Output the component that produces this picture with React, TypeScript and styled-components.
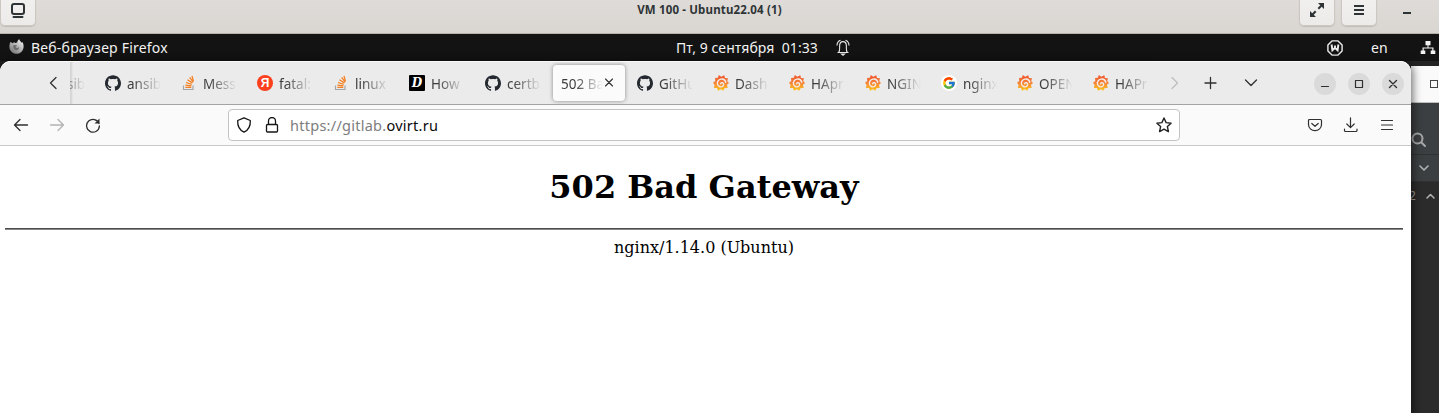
import React from 'react';
import styled, { createGlobalStyle, css } from 'styled-components';
import { SiGithub } from 'react-icons/si';
import { FcGoogle } from 'react-icons/fc';

const GlobalStyle = createGlobalStyle`
  * { box-sizing: border-box; }
  body { margin: 0; overflow: hidden; background: #141414; }
`;

const uiFont = "'Noto Sans', 'Open Sans', sans-serif";

const Screen = styled.div`
  display: flex;
  flex-direction: column;
  width: 1439px;
  height: 413px;
  overflow: hidden;
  font-family: ${uiFont};
`;

/* Viewer title bar */
const ViewerBar = styled.header`
  display: grid;
  grid-template-columns: 1fr auto 1fr;
  height: 34px;
  flex: none;
  background: linear-gradient(#dfdbd8, #d9d5d0);
  border-bottom: 1px solid #b5b3a8;
`;

const ViewerTitle = styled.div`
  font: 700 11.5px/20px ${uiFont};
  letter-spacing: 0.15px;
  color: #2e3436;
  white-space: pre;
  margin-right: 20px;
`;

const ViewerButtons = styled.div<{ $end?: boolean }>`
  display: flex;
  gap: 6px;
  ${(p) => p.$end && 'justify-content: flex-end; padding-right: 28px; margin-left: -20px;'}
`;

const ViewerButton = styled.div`
  width: 36px;
  height: 27px;
  margin-top: -1px;
  display: flex;
  justify-content: center;
  padding-top: 3px;
  border: 1px solid #cdc7c2;
  border-top: 0;
  border-radius: 0 0 5px 5px;
  background: linear-gradient(#f1f0ee, #edebe9);
  box-shadow: 0 1px 1px rgba(0, 0, 0, 0.12);
`;

const ViewerMinimize = styled.div`
  width: 8px;
  height: 2px;
  margin: 12px 0 0 20px;
  background: #2e3436;
`;

/* Desktop top panel */
const Panel = styled.div`
  display: grid;
  grid-template-columns: 676px 1fr 112px;
  height: 27px;
  flex: none;
  background: #131313;
  color: #f2f2f2;
`;

const PanelGroup = styled.div`
  display: flex;
  align-items: center;
`;

const FirefoxMark = styled.svg`
  margin: 0 7px 2px 9px;
`;

const PanelText = styled.span<{ $spacing?: number }>`
  font-size: 14px;
  line-height: 27px;
  white-space: pre;
  letter-spacing: ${(p) => p.$spacing ?? 0}px;
`;

const Bell = styled.svg`
  margin-left: 17px;
`;

const Language = styled(PanelText)`
  margin: 0 32px 0 28px;
`;

/* Browser */
const Desktop = styled.div`
  display: flex;
  flex: 1;
  min-height: 0;
  background: #232323;
`;

const Browser = styled.main`
  position: relative;
  z-index: 1;
  display: flex;
  flex-direction: column;
  width: 1411px;
  flex: none;
  background: #fff;
  border-radius: 11px 11px 0 0;
  box-shadow: 0 2px 9px 2px rgba(0, 0, 0, 0.55);
`;

const TabBar = styled.div`
  display: flex;
  align-items: center;
  height: 44px;
  flex: none;
  background: #ebebeb;
  border-top: 1px solid #fbfbfb;
  border-bottom: 1px solid #a3a3a3;
  border-radius: 11px 11px 0 0;
  color: #3c3c3c;
`;

const ScrollBack = styled.div`
  width: 70px;
  height: 42px;
  flex: none;
  display: flex;
  align-items: center;
  padding-left: 49px;
`;

const TabStrip = styled.div`
  display: flex;
  width: 1089px;
  height: 42px;
  flex: none;
  overflow: hidden;
  box-shadow: inset 3px 0 2px -1px #d3d3d3;
`;

const Tab = styled.div<{ $active?: boolean; $cut?: boolean }>`
  display: flex;
  align-items: center;
  width: 72px;
  height: 36px;
  flex: none;
  margin: 3px 2px;
  padding: 0 8px;
  border-radius: 4px;
  ${(p) => p.$cut && 'margin-left: -49px;'}
  ${(p) =>
    p.$active &&
    css`
      background: #fbfbfb;
      box-shadow: 0 0 4px rgba(0, 0, 0, 0.42);
    `}
`;

const TabIcon = styled.span`
  display: flex;
  width: 16px;
  height: 16px;
  flex: none;
  margin-right: 6px;
  svg { width: 16px; height: 16px; display: block; }
`;

const TabLabel = styled.span`
  flex: 1;
  min-width: 0;
  overflow: hidden;
  white-space: pre;
  font-size: 13.5px;
  line-height: 22px;
  padding-top: 1px;
  mask-image: linear-gradient(to right, #000 calc(100% - 28px), transparent);
`;

const Octocat = styled(SiGithub)` color: #24292f; `;

const YandexMark = styled.span`
  width: 16px;
  height: 16px;
  border-radius: 50%;
  background: #fc3f1d;
  color: #fff;
  text-align: center;
  font: 700 12px/16px 'Liberation Sans', sans-serif;
`;

const OceanMark = styled.span`
  width: 16px;
  height: 16px;
  border-radius: 1px;
  background: #000;
  color: #fff;
  text-align: center;
  font: italic 700 12px/16px 'DejaVu Serif', serif;
`;

const GoogleMark = styled.span`
  display: flex;
  width: 16px;
  height: 16px;
  border-radius: 50%;
  background: #fff;
  align-items: center;
  justify-content: center;
  && svg { width: 14px; height: 14px; }
`;

const TabActions = styled.div`
  display: flex;
  align-items: center;
  gap: 25px;
  margin-left: 7px;
`;

const NewTabActions = styled(TabActions)`
  margin-left: 21px;
`;

const WindowControls = styled.div`
  display: flex;
  gap: 12px;
  margin: 1px 7px 0 auto;
`;

const WindowControl = styled.div`
  display: flex;
  width: 22px;
  height: 22px;
  border-radius: 50%;
  background: #dadada;
`;

const NavBar = styled.div`
  display: flex;
  align-items: center;
  height: 41px;
  flex: none;
  background: #fafafa;
  border-bottom: 1px solid #c9c9c9;
`;

const NavButtons = styled.div`
  display: flex;
  gap: 20px;
  width: 228px;
  flex: none;
  padding-left: 13px;
`;

const UrlBar = styled.div`
  display: flex;
  align-items: center;
  width: 952px;
  height: 32px;
  flex: none;
  padding: 0 7px;
  border: 1px solid #c3c3c3;
  border-radius: 4px;
  background: #fff;
`;

const UrlIcons = styled.div`
  display: flex;
  gap: 12px;
  margin-right: 10px;
`;

const Url = styled.span`
  flex: 1;
  padding-bottom: 1px;
  font-size: 14.5px;
  line-height: 20px;
  color: #7d7d7d;
  letter-spacing: 0.26px;
  b { font-weight: 400; color: #0b0b0b; }
`;

const NavTools = styled.div`
  display: flex;
  gap: 20px;
  margin: 0 16px 0 auto;
`;

const Page = styled.section`
  display: flex;
  flex-direction: column;
  align-items: center;
  padding: 0 8px 0 5px;
  color: #000;
  font-family: 'DejaVu Serif', serif;
`;

const Heading = styled.h1`
  margin: 22px 0 0;
  font-size: 32px;
  line-height: 38px;
  font-weight: 700;
`;

const Rule = styled.hr`
  width: 100%;
  height: 2px;
  margin: 22px 0 0;
  border: 0;
  border-top: 1px solid #4c4c4c;
  background: #858585;
`;

const Server = styled.p`
  margin: 8px 0 0;
  font-size: 16px;
  line-height: 19px;
`;

/* Window peeking out on the right */
const BackWindow = styled.aside`
  display: flex;
  flex-direction: column;
  width: 28px;
  margin-top: 5px;
  background: #2b2b2b;
  color: #afb1b3;
`;

const BackTitle = styled.div`
  height: 37px;
  flex: none;
  padding: 14px 0 0 19px;
  background: #fafafa;
  border-bottom: 1px solid #c0c0c0;
`;

const BackRow = styled.div<{ $height: number; $end?: boolean }>`
  display: flex;
  height: ${(p) => p.$height}px;
  flex: none;
  align-items: ${(p) => (p.$end ? 'flex-end' : 'center')};
  justify-content: ${(p) => (p.$end ? 'flex-start' : 'center')};
  padding-bottom: ${(p) => (p.$end ? 6 : 0)}px;
  padding-right: 2px;
  background: #3c3f41;
  border-bottom: 1px solid #2f3133;
`;

const Problems = styled.div`
  display: flex;
  align-items: center;
  gap: 10px;
  padding: 4px 0 0 0;
  margin-left: -2px;
  font: 12px/20px ${uiFont};
  color: #a09a94;
`;

type IconProps = {
  d: string;
  size?: number;
  color?: string;
  width?: number;
};

const Line = ({ d, size = 16, color = '#303030', width = 1.2 }: IconProps) => (
  <svg
    width={size}
    height={size}
    viewBox={`0 0 ${size} ${size}`}
    fill="none"
    stroke={color}
    strokeWidth={width}
    strokeLinecap="round"
    strokeLinejoin="round"
  >
    <path d={d} />
  </svg>
);

const favicons: Record<string, React.ReactNode> = {
  github: <Octocat />,
  stack: (
    <svg viewBox="0 0 16 16" fill="none">
      <path d="M2.5 10.5v4h9.5v-4" stroke="#a5a5a5" strokeWidth="1.2" />
      <path
        d="M4.3 12.4h6M4.4 10.1l6 .7M5 7.5l5.7 1.8M6.4 4.8l5 3.1M8.6 2.4l3.7 4.7M11 1l1.4 5.2"
        stroke="#f48024"
        strokeWidth="1.3"
      />
    </svg>
  ),
  yandex: <YandexMark>Я</YandexMark>,
  ocean: <OceanMark>D</OceanMark>,
  grafana: (
    <svg viewBox="0 0 16 16" fill="none">
      <path
        d="M5.800 0 8.200 1.700 11.300.2l.7 2.700 3 .3-.8 2.700L16 8l-2 1.800.7 3.100-2.900.1-1.600 2.700-2.300-1.500-2.700 1.600-1.300-2.700L.8 13l.8-2.900L0 7.700l2.300-1.800L2 3l2.900-.2z"
        fill="url(#grafanaFill)"
      />
      <path
        d="M12.800 7.200C12.200 4.900 10.200 3.700 8 4.100 5.400 4.600 4 6.900 4.500 9.200c.5 2 2.500 3.200 4.400 2.500 1.600-.6 2.200-2.400 1.300-3.500-.8-1-2.400-.7-2.500.6"
        stroke="#f4ece6"
        strokeWidth="1.400"
        strokeLinecap="round"
      />
    </svg>
  ),
  google: (
    <GoogleMark>
      <FcGoogle />
    </GoogleMark>
  ),
};

const tabs: { icon?: string; label: string; cut?: boolean }[] = [
  { icon: 'github', label: 'ansib', cut: true },
  { icon: 'github', label: 'ansib' },
  { icon: 'stack', label: 'Mess' },
  { icon: 'yandex', label: 'fatal:' },
  { icon: 'stack', label: 'linux' },
  { icon: 'ocean', label: 'How' },
  { icon: 'github', label: 'certb' },
  { label: '502 Ba' },
  { icon: 'github', label: 'GitHu' },
  { icon: 'grafana', label: 'Dash' },
  { icon: 'grafana', label: 'HApr' },
  { icon: 'grafana', label: 'NGIN' },
  { icon: 'google', label: 'nginx' },
  { icon: 'grafana', label: 'OPEN' },
  { icon: 'grafana', label: 'HAPr' },
];

export default function App() {
  return (
    <Screen>
      <GlobalStyle />
      <svg width="0" height="0" style={{ position: 'absolute' }}>
        <linearGradient id="grafanaFill" x1="0" y1="0" x2="0" y2="1">
          <stop offset="0" stopColor="#f0532c" />
          <stop offset="0.5" stopColor="#f5843a" />
          <stop offset="1" stopColor="#fcc81a" />
        </linearGradient>
        <linearGradient id="firefoxFill" x1="1" y1="0" x2="0.2" y2="1">
          <stop offset="0" stopColor="#ffffff" />
          <stop offset="0.45" stopColor="#bdbdbd" />
          <stop offset="1" stopColor="#777777" />
        </linearGradient>
      </svg>

      <ViewerBar>
        <ViewerButtons>
          <ViewerButton>
            <svg width="16" height="18" viewBox="0 0 16 18" fill="none" stroke="#2e3436">
              <rect x="2" y="2" width="12" height="10" rx="2" strokeWidth="2" />
              <path d="M3.5 15h9" strokeWidth="2" strokeLinecap="round" />
            </svg>
          </ViewerButton>
        </ViewerButtons>
        <ViewerTitle>VM 100 - Ubuntu22.04 (1)</ViewerTitle>
        <ViewerButtons $end>
          <ViewerButton>
            <svg width="16" height="16" viewBox="0 0 16 16" fill="#2e3436" stroke="#2e3436">
              <path d="M9 1h6v6zM1 9v6h6z" stroke="none" />
              <path d="M9.3 6.7 12.5 3.5M6.7 9.3l-3.2 3.2" strokeWidth="2" />
            </svg>
          </ViewerButton>
          <ViewerButton>
            <svg width="16" height="16" viewBox="0 0 16 16" fill="#2e3436">
              <path d="M3 3h10v2H3zM3 7h10v2H3zM3 11h10v2H3z" />
            </svg>
          </ViewerButton>
          <ViewerMinimize />
        </ViewerButtons>
      </ViewerBar>

      <Panel>
        <PanelGroup>
          <FirefoxMark width="15" height="15" viewBox="0 0 15 15">
            <path
              d="M1.700 2.800 3.300 4.200 5.200 3.200 6.200 4.100 8.200 3.600C8.300 2.200 9 1 10.300.3c.3 1.500 1.300 2.300 2.300 3.400l.7-.6c1.200 1.800 1.500 3.700 1.200 5.600C13.900 12.300 11 14.800 7.500 14.800 3.700 14.800.5 11.800.4 8 .3 5.900.9 4.100 1.700 2.800z"
              fill="url(#firefoxFill)"
            />
            <path d="M4.500 6.300c1.500-.6 2.800.1 3.800.5l-1.700 1c.5 1.500 2.500 1.500 3.500.3.200 2-1.200 3.300-2.900 3.200-2.100-.2-3.500-2.300-2.700-5z" fill="#6d6d6d" />
          </FirefoxMark>
          <PanelText $spacing={0.22}>Веб-браузер Firefox</PanelText>
        </PanelGroup>
        <PanelGroup>
          <PanelText $spacing={0.05}>Пт, 9 сентября  01:33</PanelText>
          <Bell width="16" height="17" viewBox="0 0 16 17" fill="none" stroke="#e8e8e8" strokeWidth="1.1">
            <path d="M2.5 13.5h11M3.8 13.3C5 11.5 4.6 9.5 4.6 7c0-2.5 1.3-4.4 3.4-4.4s3.4 1.900 3.400 4.400c0 2.500-.4 4.500.8 6.300" />
            <path d="M5.500 1.200C3.200 2 2 3.900 2 6.500M10.500 1.200C12.800 2 14 3.900 14 6.500" />
            <path d="M6.500 15h3L8 16.300z" fill="#e8e8e8" />
          </Bell>
        </PanelGroup>
        <PanelGroup>
          <svg width="16" height="16" viewBox="0 0 16 16" fill="none" stroke="#ededed">
            <path d="M5 .9h6L15.100 5v6L11 15.100H5L.9 11V5z" strokeWidth="1.400" strokeLinejoin="round" />
            <path d="M4.600 4.500 5.400 10.200 8 7.800l2.600 2.400.8-5.700M8 5.500v2.500" strokeWidth="1.900" />
          </svg>
          <Language>en</Language>
          <svg width="16" height="16" viewBox="0 0 16 16" fill="#f2f2f2">
            <path d="M5.500 1h5v4.300h-2V7.500h5v3h1.800V14h-4.600v-3.500h1.600v-2H3.700v2h1.600V14H.7v-3.500h1.800v-3h5V5.300h-2z" />
          </svg>
        </PanelGroup>
      </Panel>

      <Desktop>
        <Browser>
          <TabBar>
            <ScrollBack>
              <Line d="M7 2.500 1.500 8 7 13.500" width={1.300} />
            </ScrollBack>
            <TabStrip>
              {tabs.map((tab, i) => (
                <Tab key={i} $active={!tab.icon} $cut={tab.cut}>
                  {tab.icon && <TabIcon>{favicons[tab.icon]}</TabIcon>}
                  <TabLabel>{tab.label}</TabLabel>
                  {!tab.icon && <Line d="M2.500 3l7 7M9.500 3l-7 7" size={14} width={1.100} />}
                </Tab>
              ))}
            </TabStrip>
            <TabActions>
              <Line d="M6 2.500 11.500 8 6 13.500" color="#bdbdbd" />
            </TabActions>
            <NewTabActions>
              <Line d="M7.500 2.500v11M2 8h11" width={1.300} />
              <Line d="M1.500 5 7 10.500 12.500 5" width={1.300} />
            </NewTabActions>
            <WindowControls>
              <WindowControl>
                <Line size={22} d="M7.500 13.500h7" />
              </WindowControl>
              <WindowControl>
                <Line size={22} d="M7.500 7.500h7v7h-7z" />
              </WindowControl>
              <WindowControl>
                <Line size={22} d="M7.500 7.500l7 7M14.500 7.500l-7 7" width={1.400} />
              </WindowControl>
            </WindowControls>
          </TabBar>

          <NavBar>
            <NavButtons>
              <Line d="M14.500 8H1.800M7 2.500 1.500 8 7 13.500" width={1.300} />
              <Line d="M1.500 8h12.700M9 2.500 14.500 8 9 13.500" color="#b3b3b3" width={1.300} />
              <svg width="16" height="16" viewBox="0 0 16 16" fill="none" stroke="#303030" strokeWidth="1.300">
                <path d="M14 6.500A6.400 6.400 0 1 0 14.400 9" strokeLinecap="round" />
                <path d="M14.500 1.500v5h-5z" fill="#303030" stroke="none" />
              </svg>
            </NavButtons>
            <UrlBar>
              <UrlIcons>
                <Line d="M8 .8 14.300 3.500C14.600 8.800 12.600 13 8 15.200 3.400 13 1.400 8.800 1.700 3.500z" color="#151515" width={1.300} />
                <Line
                  d="M4.500 7V4a3.500 3.500 0 0 1 7 0v3M3.500 7.500h9a1 1 0 0 1 1 1v5.500a1 1 0 0 1-1 1h-9a1 1 0 0 1-1-1V8.500a1 1 0 0 1 1-1z"
                  color="#151515"
                  width={1.300}
                />
              </UrlIcons>
              <Url>
                https://gitlab.<b>ovirt.ru</b>
              </Url>
              <Line
                d="M8 1l2.100 4.600 5 .6-3.700 3.400 1 5L8 12.100l-4.400 2.500 1-5L.9 6.200l5-.6z"
                color="#222"
                width={1.400}
              />
            </UrlBar>
            <NavTools>
              <Line d="M2.500 2.500h11a1 1 0 0 1 1 1V7.500a6.500 6.200 0 0 1-13 0V3.500a1 1 0 0 1 1-1zM4.800 6.500 8 9.300l3.200-2.800" />
              <Line d="M7.500 .8v9.700M3.800 7 7.500 10.600 11.200 7M1.500 12v1.500a1 1 0 0 0 1 1h10.500a1 1 0 0 0 1-1V12" />
              <Line d="M2.500 3.500h11M2.500 8h11M2.500 12.500h11" />
            </NavTools>
          </NavBar>

          <Page>
            <Heading>502 Bad Gateway</Heading>
            <Rule />
            <Server>nginx/1.14.0 (Ubuntu)</Server>
          </Page>
        </Browser>

        <BackWindow>
          <BackTitle>
            <svg width="9" height="9" viewBox="0 0 9 9" fill="none" stroke="#444" display="block">
              <rect x=".5" y=".5" width="7" height="7" />
            </svg>
          </BackTitle>
          <BackRow $height={52} $end>
            <Line d="M10.500 10.500 14 14M11.500 6.500a5 5 0 1 1-10 0 5 5 0 0 1 10 0z" color="#a5a7a9" width={2} />
          </BackRow>
          <BackRow $height={27}>
            <Line d="M1 3 5 7 9 3" size={10} color="#b0b2b4" width={1.600} />
          </BackRow>
          <Problems>
            2
            <Line d="M1 7 4.500 3.500 8 7" size={10} color="#b0b2b4" width={1.500} />
          </Problems>
        </BackWindow>
      </Desktop>
    </Screen>
  );
}
